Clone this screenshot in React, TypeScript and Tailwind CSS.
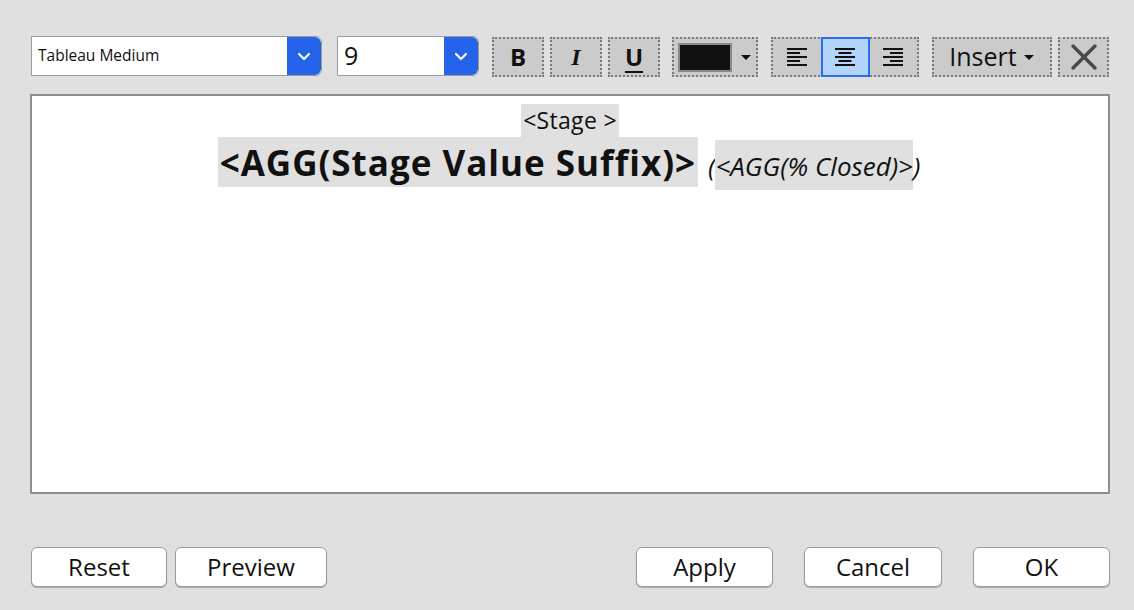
import React from 'react';

const font = { fontFamily: '"Open Sans", "Noto Sans", sans-serif' };

function Chevron() {
  return (
    <svg width="14" height="9" viewBox="0 0 14 9">
      <path d="M2 2 L7 7 L12 2" fill="none" stroke="white" strokeWidth="2.2" strokeLinecap="round" strokeLinejoin="round" />
    </svg>
  );
}

function Caret() {
  return (
    <svg width="12" height="7" viewBox="0 0 12 7">
      <path d="M1 1 H11 L6 6 Z" fill="#111" />
    </svg>
  );
}

function AlignIcon({ mode }: { mode: 'left' | 'center' | 'right' }) {
  const rows = [20, 13, 20, 13, 20];
  return (
    <svg width="20" height="18" viewBox="0 0 20 18">
      {rows.map((w, i) => {
        const x = mode === 'left' ? 0 : mode === 'right' ? 20 - w : (20 - w) / 2;
        return <rect key={i} x={x} y={i * 4} width={w} height="2" fill="#111" />;
      })}
    </svg>
  );
}

function Dropdown({ label, width, big }: { label: string; width: string; big?: boolean }) {
  return (
    <div className={`flex h-10 ${width} border border-[#9a9a9a] bg-white rounded-r-md overflow-hidden`}>
      <div className={`flex-1 flex items-center pl-1.5 text-[#111] ${big ? 'text-[25px]' : 'text-[15.5px] font-medium'}`}>
        {label}
      </div>
      <div className="w-[34px] bg-[#2563eb] flex items-center justify-center rounded-r-md">
        <Chevron />
      </div>
    </div>
  );
}

function ToolButton({ children, width }: { children: React.ReactNode; width: string }) {
  return (
    <div className={`h-10 ${width} bg-[#cbcbcb] border-2 border-dotted border-[#7a7a7a] flex items-center justify-center`}>
      {children}
    </div>
  );
}

function DialogButton({ label, width }: { label: string; width: string }) {
  return (
    <div className={`h-10 ${width} bg-white border border-[#9c9c9c] rounded-md shadow-[0_1px_1px_rgba(0,0,0,0.25)] flex items-center justify-center text-[24px] font-medium text-[#111]`}>
      {label}
    </div>
  );
}

export default function App() {
  return (
    <div className="w-[1134px] h-[610px] bg-[#e0e0e0] pt-9 pl-[31px] pr-[24px]" style={font}>
      {/* Toolbar */}
      <div className="flex items-start">
        <Dropdown label="Tableau Medium" width="w-[291px]" />
        <div className="w-[15px]" />
        <Dropdown label="9" width="w-[142px]" big />
        <div className="w-[13px]" />
        <div className="flex gap-1.5 mt-px">
          <ToolButton width="w-[52px]">
            <span className="text-[24px] font-bold text-[#111]">B</span>
          </ToolButton>
          <ToolButton width="w-[52px]">
            <span className="text-[24px] font-bold italic text-[#111]" style={{ fontFamily: '"Liberation Serif", serif' }}>I</span>
          </ToolButton>
          <ToolButton width="w-[52px]">
            <span className="text-[24px] font-bold underline underline-offset-[5px] decoration-2 text-[#111]">U</span>
          </ToolButton>
        </div>
        <div className="w-3" />
        <div className="mt-px h-10 w-[86px] bg-[#cbcbcb] border-2 border-dotted border-[#7a7a7a] flex items-center pl-1">
          <div className="w-[54px] h-[29px] bg-[#111] border-2 border-[#8a8a8a]" />
          <div className="ml-2">
            <Caret />
          </div>
        </div>
        <div className="w-[13px]" />
        <div className="mt-px h-10 w-[148px] flex bg-[#cbcbcb] border-2 border-dotted border-[#7a7a7a]">
          <div className="flex-1 flex items-center justify-center">
            <AlignIcon mode="left" />
          </div>
          <div className="w-[49px] -my-[2px] bg-[#b3d4fd] border-2 border-[#2a6ff0] flex items-center justify-center">
            <AlignIcon mode="center" />
          </div>
          <div className="flex-1 flex items-center justify-center">
            <AlignIcon mode="right" />
          </div>
        </div>
        <div className="w-[13px]" />
        <div className="mt-px h-10 w-[120px] bg-[#cbcbcb] border-2 border-dotted border-[#7a7a7a] flex items-center justify-center gap-1.5">
          <span className="text-[25px] text-[#111]">Insert</span>
          <Caret />
        </div>
        <div className="w-1.5" />
        <div className="mt-px h-10 w-[51px] bg-[#cbcbcb] border-2 border-dotted border-[#7a7a7a] flex items-center justify-center">
          <svg width="30" height="30" viewBox="0 0 30 30">
            <path d="M4 4 L26 26 M26 4 L4 26" stroke="#4a4a4a" strokeWidth="3.5" strokeLinecap="round" />
          </svg>
        </div>
      </div>

      {/* Editor */}
      <div className="mt-[17px] -ml-px w-[1080px] h-[400px] bg-white border-2 border-[#8e8e8e] flex flex-col items-center pt-[8px]">
        <div className="h-[33px] px-0.5 bg-[#e0e0e0] text-[23px] leading-[33px] text-[#111] tracking-[0.3px]">&lt;Stage &gt;</div>
        <div className="h-[50px] leading-[52px] whitespace-nowrap -ml-0.5">
          <span className="inline-block h-[50px] bg-[#e0e0e0] text-[35px] leading-[52px] font-bold text-[#111] px-0.5 tracking-[1px]">
            &lt;AGG(Stage Value Suffix)&gt;
          </span>
          <span className="inline-block w-[10px]" />
          <span className="text-[26px] italic text-[#111]">
            (<span className="inline-block h-[50px] leading-[52px] bg-[#e0e0e0]">&lt;AGG(% Closed)&gt;</span>)
          </span>
        </div>
      </div>

      {/* Buttons */}
      <div className="mt-[53px] flex items-center">
        <DialogButton label="Reset" width="w-[136px]" />
        <div className="w-2" />
        <DialogButton label="Preview" width="w-[152px]" />
        <div className="flex-1" />
        <DialogButton label="Apply" width="w-[137px]" />
        <div className="w-[31px]" />
        <DialogButton label="Cancel" width="w-[138px]" />
        <div className="w-[31px]" />
        <DialogButton label="OK" width="w-[137px]" />
      </div>
    </div>
  );
}
